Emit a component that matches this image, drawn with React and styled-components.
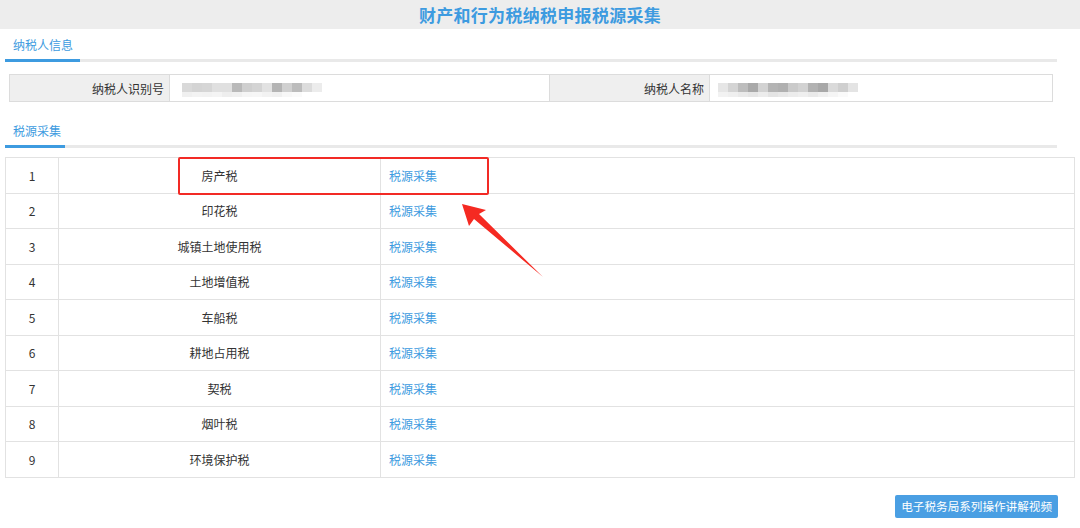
import React from "react";
import styled, { createGlobalStyle } from "styled-components";

const Global = createGlobalStyle`
  body {
    margin: 0;
    background: #fff;
    font-family: "Noto Sans CJK SC", "Liberation Sans", sans-serif;
    color: #333;
  }
`;

const Page = styled.div`
  position: relative;
  width: 1080px;
  height: 528px;
  overflow: hidden;
`;

const Header = styled.div`
  height: 29px;
  background: #ededed;
  display: flex;
  align-items: center;
  justify-content: center;
`;

const Title = styled.h1`
  margin: 0;
  font-size: 17px;
  font-weight: bold;
  color: #3d9be0;
  letter-spacing: 0.3px;
`;

const TabBar = styled.div`
  margin: ${(p) => p.top}px 23px 0 5px;
  border-bottom: 3px solid #e9e9e9;
  display: flex;
`;

const Tab = styled.div`
  font-size: 12px;
  color: #3d9be0;
  padding: 0 ${(p) => p.pad}px 5px 8px;
  margin-bottom: -3px;
  border-bottom: 3px solid #3d9be0;
  line-height: 18px;
`;

const InfoRow = styled.div`
  margin: 12px 27px 0 9px;
  height: 26px;
  border: 1px solid #dcdcdc;
  display: grid;
  grid-template-columns: 160px 379px 161px 1fr;
`;

const Label = styled.div`
  background: #efefef;
  font-size: 12px;
  display: flex;
  align-items: center;
  justify-content: flex-end;
  padding-right: 5px;
  border-left: ${(p) => (p.divide ? "1px solid #dcdcdc" : "none")};
  border-right: 1px solid #dcdcdc;
`;

const Value = styled.div`
  display: flex;
  align-items: center;
  padding-left: ${(p) => p.pad}px;
`;

const Blur = styled.div`
  display: flex;
  flex-direction: column;
  filter: blur(0.7px);
  margin-top: 4px;
`;

const BlurLine = styled.div`
  display: flex;
`;

const Pix = styled.span`
  width: ${(p) => p.w}px;
  height: ${(p) => p.h}px;
  background: ${(p) => p.c};
`;

const Table = styled.table`
  margin: 9px 0 0 5px;
  width: 1070px;
  border-collapse: collapse;
  table-layout: fixed;
  font-size: 12px;
`;

const Cell = styled.td`
  height: 34.5px;
  border: 1px solid #e2e2e2;
  text-align: ${(p) => p.align || "center"};
  padding: 0 ${(p) => (p.align === "left" ? "8px" : "0")};
  color: ${(p) => (p.link ? "#3d9be0" : "#333")};
`;

const Footer = styled.div`
  display: flex;
  justify-content: flex-end;
  padding: 17px 22px 0 0;
`;

const VideoButton = styled.button`
  background: #4a9fe3;
  color: #fff;
  border: none;
  border-radius: 2px;
  font-family: inherit;
  font-size: 11.6px;
  height: 23px;
  padding: 0 6px;
`;

const Highlight = styled.div`
  position: absolute;
  left: 178px;
  top: 157px;
  width: 307px;
  height: 34px;
  border: 2px solid #f22a25;
  border-radius: 2px;
`;

const Arrow = styled.svg`
  position: absolute;
  left: 455px;
  top: 198px;
`;

const taxes = [
  "房产税",
  "印花税",
  "城镇土地使用税",
  "土地增值税",
  "车船税",
  "耕地占用税",
  "契税",
  "烟叶税",
  "环境保护税",
];

const blur1 = [
  "#d9d9d9", "#d4d4d4", "#d6d6d6", "#e0e0e0", "#e0e0e0", "#b9b9b9", "#cfcfcf",
  "#d4d4d4", "#e2e2e2", "#b4b4b4", "#d0d0d0", "#bcbcbc", "#dcdcdc", "#ececec",
];
const blur1b = [
  "#f0f0f0", "#f3f3f3", "#f2f2f2", "#f4f4f4", "#eeeeee", "#f0f0f0", "#f5f5f5",
  "#f6f6f6", "#f2f2f2", "#f0f0f0", "#f7f7f7", "#fafafa", "#ffffff", "#ffffff",
];
const blur2 = [
  "#e6e6e6", "#d4d4d4", "#bdbdbd", "#a9a9a9", "#d2d2d2", "#b4b4b4", "#b0b0b0",
  "#cacaca", "#d2d2d2", "#b2b2b2", "#a8a8a8", "#dadada", "#cfcfcf", "#e4e4e4",
];
const blur2b = [
  "#f2f2f2", "#efefef", "#eaeaea", "#e6e6e6", "#ececec", "#e4e4e4", "#e8e8e8",
  "#ececec", "#efefef", "#eaeaea", "#f0f0f0", "#f5f5f5", "#fafafa", "#ffffff",
];

function Blurred({ top, bottom }) {
  return (
    <Blur>
      <BlurLine>
        {top.map((c, i) => (
          <Pix key={i} c={c} w={10} h={9} />
        ))}
      </BlurLine>
      <BlurLine>
        {bottom.map((c, i) => (
          <Pix key={i} c={c} w={10} h={5} />
        ))}
      </BlurLine>
    </Blur>
  );
}

export default function App() {
  return (
    <Page>
      <Global />
      <Header>
        <Title>财产和行为税纳税申报税源采集</Title>
      </Header>

      <TabBar top={7}>
        <Tab pad={7}>纳税人信息</Tab>
      </TabBar>

      <InfoRow>
        <Label>纳税人识别号</Label>
        <Value pad={12}>
          <Blurred top={blur1} bottom={blur1b} />
        </Value>
        <Label divide>纳税人名称</Label>
        <Value pad={8}>
          <Blurred top={blur2} bottom={blur2b} />
        </Value>
      </InfoRow>

      <TabBar top={20}>
        <Tab pad={4}>税源采集</Tab>
      </TabBar>

      <Table>
        <colgroup>
          <col style={{ width: 53 }} />
          <col style={{ width: 322 }} />
          <col />
        </colgroup>
        <tbody>
          {taxes.map((t, i) => (
            <tr key={t}>
              <Cell>{i + 1}</Cell>
              <Cell>{t}</Cell>
              <Cell align="left" link>
                税源采集
              </Cell>
            </tr>
          ))}
        </tbody>
      </Table>

      <Footer>
        <VideoButton>电子税务局系列操作讲解视频</VideoButton>
      </Footer>

      <Highlight />
      <Arrow width="95" height="85" viewBox="0 0 95 85">
        <polygon points="7,6 31,12 24,16 88,79 19,21 14,28" fill="#f52a22" />
      </Arrow>
    </Page>
  );
}
